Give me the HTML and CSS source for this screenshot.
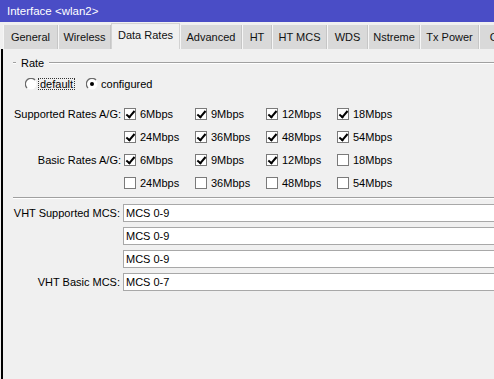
FILE: index.html
```html
<!DOCTYPE html>
<html lang="en">
<head>
<meta charset="UTF-8">
<title>Interface &lt;wlan2&gt;</title>
<link rel="stylesheet" href="styles.css">
</head>
<body>
<div class="titlebar">Interface &lt;wlan2&gt;</div>

<div class="tabs">
    <div class="tab">General</div>
    <div class="tab">Wireless</div>
    <div class="tab active">Data Rates</div>
    <div class="tab">Advanced</div>
    <div class="tab">HT</div>
    <div class="tab">HT MCS</div>
    <div class="tab">WDS</div>
    <div class="tab">Nstreme</div>
    <div class="tab">Tx Power</div>
    <div class="tab">Country</div>
</div>

<div class="panel">
    <div class="group">
        <div class="group-head"><span>Rate</span></div>

        <div class="radio-row">
            <label class="radio">
                <svg width="12" height="12" viewBox="0 0 12 12"><circle cx="6" cy="6" r="5.5" fill="#fff"/><path d="M10 2 A5.5 5.5 0 0 0 2 10" fill="none" stroke="#6a6a6a" stroke-width="1.3"/></svg>
                <span class="focus">default</span>
            </label>
            <label class="radio">
                <svg width="12" height="12" viewBox="0 0 12 12"><circle cx="6" cy="6" r="5.5" fill="#fff"/><path d="M10 2 A5.5 5.5 0 0 0 2 10" fill="none" stroke="#6a6a6a" stroke-width="1.3"/><circle cx="6" cy="6" r="2" fill="#000"/></svg>
                <span>configured</span>
            </label>
        </div>

        <div class="rates">
            <div class="rate-label">Supported Rates A/G:</div>
            <label class="check"><span class="box on"></span>6Mbps</label>
            <label class="check"><span class="box on"></span>9Mbps</label>
            <label class="check"><span class="box on"></span>12Mbps</label>
            <label class="check"><span class="box on"></span>18Mbps</label>

            <div class="rate-label"></div>
            <label class="check"><span class="box on"></span>24Mbps</label>
            <label class="check"><span class="box on"></span>36Mbps</label>
            <label class="check"><span class="box on"></span>48Mbps</label>
            <label class="check"><span class="box on"></span>54Mbps</label>

            <div class="rate-label">Basic Rates A/G:</div>
            <label class="check"><span class="box on"></span>6Mbps</label>
            <label class="check"><span class="box on"></span>9Mbps</label>
            <label class="check"><span class="box on"></span>12Mbps</label>
            <label class="check"><span class="box"></span>18Mbps</label>

            <div class="rate-label"></div>
            <label class="check"><span class="box"></span>24Mbps</label>
            <label class="check"><span class="box"></span>36Mbps</label>
            <label class="check"><span class="box"></span>48Mbps</label>
            <label class="check"><span class="box"></span>54Mbps</label>
        </div>
    </div>

    <div class="mcs">
        <div class="mcs-label">VHT Supported MCS:</div>
        <div class="field">MCS 0-9</div>
        <div class="mcs-label"></div>
        <div class="field">MCS 0-9</div>
        <div class="mcs-label"></div>
        <div class="field">MCS 0-9</div>
        <div class="mcs-label">VHT Basic MCS:</div>
        <div class="field">MCS 0-7</div>
    </div>
</div>
</body>
</html>
```

FILE: styles.css
```css
* {
    box-sizing: border-box;
}
body {
    margin: 0;
    width: 494px;
    height: 379px;
    overflow: hidden;
    background-color: #f0f0f0;
    color: #000;
    font-family: "Liberation Sans", Arial, sans-serif;
    font-size: 11px;
    display: flex;
    flex-direction: column;
}
.titlebar {
    height: 22px;
    line-height: 22px;
    padding-left: 7px;
    background-color: #4a4dc6; /* window caption */
    color: #fff;
    font-size: 11.5px;
}

/* tab strip */
.tabs {
    display: flex;
    align-items: flex-end;
    height: 26px;
    margin-top: 1px;
    padding-left: 3px;
    white-space: nowrap;
}
.tab {
    flex: none;
    height: 24px;
    line-height: 24px;
    text-align: center;
    background-color: #d9d9d9;
    border-left: 1px solid #f6f6f6;
    border-right: 1px solid #c6c6c6;
    color: #111;
}
.tab.active {
    height: 26px;
    line-height: 23px;
    background-color: #f0f0f0;
    border: 1px solid #d2d2d2;
    border-bottom: none;
}
.tab:nth-child(1) { width: 55px; }
.tab:nth-child(2) { width: 53px; }
.tab:nth-child(3) { width: 69px; }
.tab:nth-child(4) { width: 62px; }
.tab:nth-child(5) { width: 30px; }
.tab:nth-child(6) { width: 55px; }
.tab:nth-child(7) { width: 41px; }
.tab:nth-child(8) { width: 52px; }
.tab:nth-child(9) { width: 59px; }
.tab:nth-child(10) { width: 60px; }

/* page body */
.panel {
    flex: 1;
    margin-left: 1px;
    border-left: 2px solid #000;
    padding-top: 7px;
    padding-left: 10px;
}
.group {
    padding-bottom: 3px;
    border-bottom: 1px solid #a0a0a0;
    box-shadow: 0 1px 0 #fff;
}
.group-head {
    display: flex;
    align-items: center;
    height: 14px;
}
.group-head::before,
.group-head::after {
    content: "";
    border-top: 1px solid #a0a0a0;
    border-bottom: 1px solid #fff;
}
.group-head::before {
    width: 3px;
    margin-right: 5px;
}
.group-head::after {
    flex: 1;
    margin-left: 5px;
}

.radio-row {
    display: flex;
    align-items: center;
    gap: 11px;
    height: 16px;
    margin-top: 6px;
    padding-left: 12px;
}
.radio {
    display: flex;
    align-items: center;
    gap: 1px;
}
.radio span {
    padding: 0 1px;
    line-height: 10px;
    border: 1px dotted transparent;
}
.radio .focus {
    border-color: #333;
}

/* checkbox grid */
.rates {
    display: grid;
    grid-template-columns: 111px repeat(4, 71px);
    grid-auto-rows: 23px;
    margin-top: 10px;
}
.rate-label {
    text-align: right;
    padding-right: 3px;
    align-self: center;
}
.check {
    display: flex;
    align-items: center;
    gap: 4px;
}
.box {
    width: 12px;
    height: 12px;
    border: 1px solid #7a7a7a;
    background-color: #fff;
    position: relative;
}
.box.on::after {
    content: "";
    position: absolute;
    left: 3px;
    top: 0px;
    width: 3px;
    height: 7px;
    border-right: 2px solid #000;
    border-bottom: 2px solid #000;
    transform: rotate(40deg);
}

/* VHT MCS fields */
.mcs {
    display: grid;
    grid-template-columns: 110px 400px;
    grid-auto-rows: 18px;
    row-gap: 5px;
    margin-top: 6px;
}
.mcs-label {
    text-align: right;
    padding-right: 3px;
    align-self: center;
}
.field {
    border: 1px solid #a8a8a8;
    background-color: #fff;
    padding-left: 2px;
    line-height: 16px;
}
```
